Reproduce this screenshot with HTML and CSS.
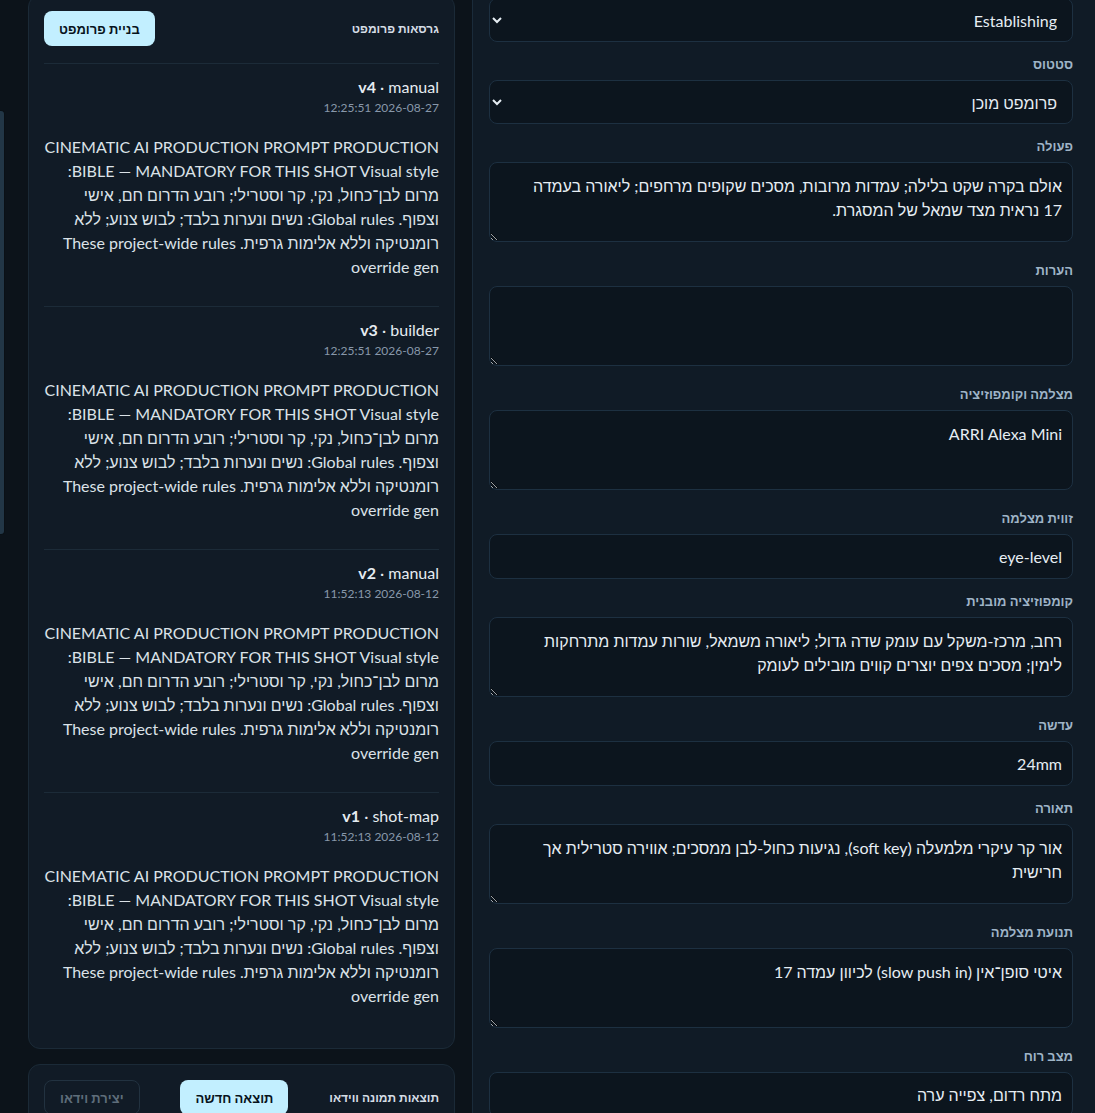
FILE: index.html
```html
<!DOCTYPE html>
<html lang="he" dir="rtl">
<head>
    <meta charset="UTF-8">
    <meta name="viewport" content="width=device-width, initial-scale=1.0">
    <title>עריכת שוט</title>
    <link rel="stylesheet" href="styles.css">
</head>
<body>
    <div class="layout">
        <main class="shotPanel">
            <div class="field">
                <label>סוג שוט</label>
                <select>
                    <option>Establishing</option>
                </select>
            </div>
            <div class="field">
                <label>סטטוס</label>
                <select>
                    <option>פרומפט מוכן</option>
                </select>
            </div>
            <div class="field area">
                <label>פעולה</label>
                <textarea>אולם בקרה שקט בלילה; עמדות מרובות, מסכים שקופים מרחפים; ליאורה בעמדה 17 נראית מצד שמאל של המסגרת.</textarea>
            </div>
            <div class="field area">
                <label>הערות</label>
                <textarea></textarea>
            </div>
            <div class="field area">
                <label>מצלמה וקומפוזיציה</label>
                <textarea>ARRI Alexa Mini</textarea>
            </div>
            <div class="field">
                <label>זווית מצלמה</label>
                <input type="text" value="eye-level">
            </div>
            <div class="field area">
                <label>קומפוזיציה מובנית</label>
                <textarea>רחב, מרכז-משקל עם עומק שדה גדול; ליאורה משמאל, שורות עמדות מתרחקות לימין; מסכים צפים יוצרים קווים מובילים לעומק</textarea>
            </div>
            <div class="field">
                <label>עדשה</label>
                <input type="text" value="24mm">
            </div>
            <div class="field area">
                <label>תאורה</label>
                <textarea>אור קר עיקרי מלמעלה (soft key), נגיעות כחול-לבן ממסכים; אווירה סטרילית אך חרישית</textarea>
            </div>
            <div class="field area">
                <label>תנועת מצלמה</label>
                <textarea>איטי סופן־אין (slow push in) לכיוון עמדה 17</textarea>
            </div>
            <div class="field">
                <label>מצב רוח</label>
                <input type="text" value="מתח רדום, צפייה ערה">
            </div>
        </main>

        <aside class="side">
            <section class="card">
                <div class="cardHead">
                    <h3>גרסאות פרומפט</h3>
                    <button class="primary">בניית פרומפט</button>
                </div>
                <div class="versionList">
                    <div class="version">
                        <div class="versionTitle"><b>v4</b> · manual</div>
                        <div class="versionDate">2026-08-27 12:25:51</div>
                        <p class="versionText">CINEMATIC AI PRODUCTION PROMPT PRODUCTION BIBLE — MANDATORY FOR THIS SHOT Visual style: מרום לבן־כחול, נקי, קר וסטרילי; רובע הדרום חם, אישי וצפוף. Global rules: נשים ונערות בלבד; לבוש צנוע; ללא רומנטיקה וללא אלימות גרפית. These project-wide rules override gen</p>
                    </div>
                    <div class="version">
                        <div class="versionTitle"><b>v3</b> · builder</div>
                        <div class="versionDate">2026-08-27 12:25:51</div>
                        <p class="versionText">CINEMATIC AI PRODUCTION PROMPT PRODUCTION BIBLE — MANDATORY FOR THIS SHOT Visual style: מרום לבן־כחול, נקי, קר וסטרילי; רובע הדרום חם, אישי וצפוף. Global rules: נשים ונערות בלבד; לבוש צנוע; ללא רומנטיקה וללא אלימות גרפית. These project-wide rules override gen</p>
                    </div>
                    <div class="version">
                        <div class="versionTitle"><b>v2</b> · manual</div>
                        <div class="versionDate">2026-08-12 11:52:13</div>
                        <p class="versionText">CINEMATIC AI PRODUCTION PROMPT PRODUCTION BIBLE — MANDATORY FOR THIS SHOT Visual style: מרום לבן־כחול, נקי, קר וסטרילי; רובע הדרום חם, אישי וצפוף. Global rules: נשים ונערות בלבד; לבוש צנוע; ללא רומנטיקה וללא אלימות גרפית. These project-wide rules override gen</p>
                    </div>
                    <div class="version">
                        <div class="versionTitle"><b>v1</b> · shot-map</div>
                        <div class="versionDate">2026-08-12 11:52:13</div>
                        <p class="versionText">CINEMATIC AI PRODUCTION PROMPT PRODUCTION BIBLE — MANDATORY FOR THIS SHOT Visual style: מרום לבן־כחול, נקי, קר וסטרילי; רובע הדרום חם, אישי וצפוף. Global rules: נשים ונערות בלבד; לבוש צנוע; ללא רומנטיקה וללא אלימות גרפית. These project-wide rules override gen</p>
                    </div>
                </div>
            </section>

            <section class="card results">
                <div class="cardHead">
                    <h3>תוצאות תמונה ווידאו</h3>
                    <button class="primary">תוצאה חדשה</button>
                    <button class="ghost" disabled>יצירת וידאו</button>
                </div>
            </section>
        </aside>

        <div class="rail"></div>
    </div>
</body>
</html>
```

FILE: styles.css
```css
html {
    color-scheme: dark;
}
body {
    margin: 0;
    background-color: #0c131a;
    color: #dde4ea;
    font-family: Lato, "Liberation Sans", "DejaVu Sans", sans-serif;
    overflow: hidden;
}
.layout {
    display: flex;
    align-items: flex-start;
}

/* right form column */
.shotPanel {
    flex: none;
    width: 623px;
    box-sizing: border-box;
    margin-top: -27px;
    padding: 0 22px 0 16px;
    min-height: 1200px;
    background-color: #101b26;
    border-left: 1px solid #1a2b3a;
}
.field {
    display: flex;
    flex-direction: column;
    gap: 6px;
    margin-bottom: 13px;
}
.field label {
    font-size: 13px;
    line-height: 19px;
    font-weight: 700;
    color: #9fb4c7;
}
.field select,
.field input,
.field textarea {
    box-sizing: border-box;
    width: 100%;
    background-color: #0c151e;
    border: 1px solid #1d3041;
    border-radius: 8px;
    color: #e6edf3;
    font-family: inherit;
    font-size: 16px;
    outline: none;
}
.field select {
    height: 44px;
    padding: 0 11px 0 4px;
}
.field input {
    height: 45px;
    padding: 0 10px;
}
.field textarea {
    height: 80px;
    padding: 11px 10px 11px 22px;
    line-height: 24px;
    resize: vertical;
    margin-bottom: 6px;
}

/* left column */
.side {
    flex: none;
    width: 427px;
    margin-top: -5px;
    margin-right: 17px;
}
.card {
    background-color: #111b26;
    border: 1px solid #1b2a37;
    border-radius: 12px;
    padding: 15px;
}
.results {
    margin-top: 15px;
}
.cardHead {
    display: flex;
    align-items: center;
    justify-content: space-between;
}
.cardHead h3 {
    margin: 0;
    font-size: 12px;
    font-weight: 700;
    color: #d5dde5;
}
.cardHead button {
    height: 35px;
    padding: 0 15px;
    border-radius: 8px;
    font-family: inherit;
    font-size: 13px;
    font-weight: 700;
}
.primary {
    background-color: #c2efff;
    color: #08131c;
    border: none;
}
.ghost {
    background-color: transparent;
    color: #5e6d7a;
    border: 1px solid #223240;
}
.versionList {
    margin-top: 17px;
}
.version {
    border-top: 1px solid #1c2b38;
    padding: 13px 0 27px;
}
.version:last-child {
    padding-bottom: 25px;
}
.versionTitle {
    font-size: 16px;
    line-height: 20px;
    color: #e6ecf1;
}
.versionDate {
    margin-top: 3px;
    font-size: 12px;
    line-height: 16px;
    color: #8898aa;
}
.versionText {
    margin: 19px 0 0 0;
    font-size: 16px;
    line-height: 24px;
    color: #dbe2e8;
}

/* cut-off sidebar at the far left */
.rail {
    flex: none;
    width: 5px;
    height: 425px;
    margin-top: 110px;
    margin-right: 23px;
    box-sizing: border-box;
    background-color: #223646;
    border: 1px solid #0a1016;
    border-left: none;
    border-radius: 0 4px 4px 0;
}
```
